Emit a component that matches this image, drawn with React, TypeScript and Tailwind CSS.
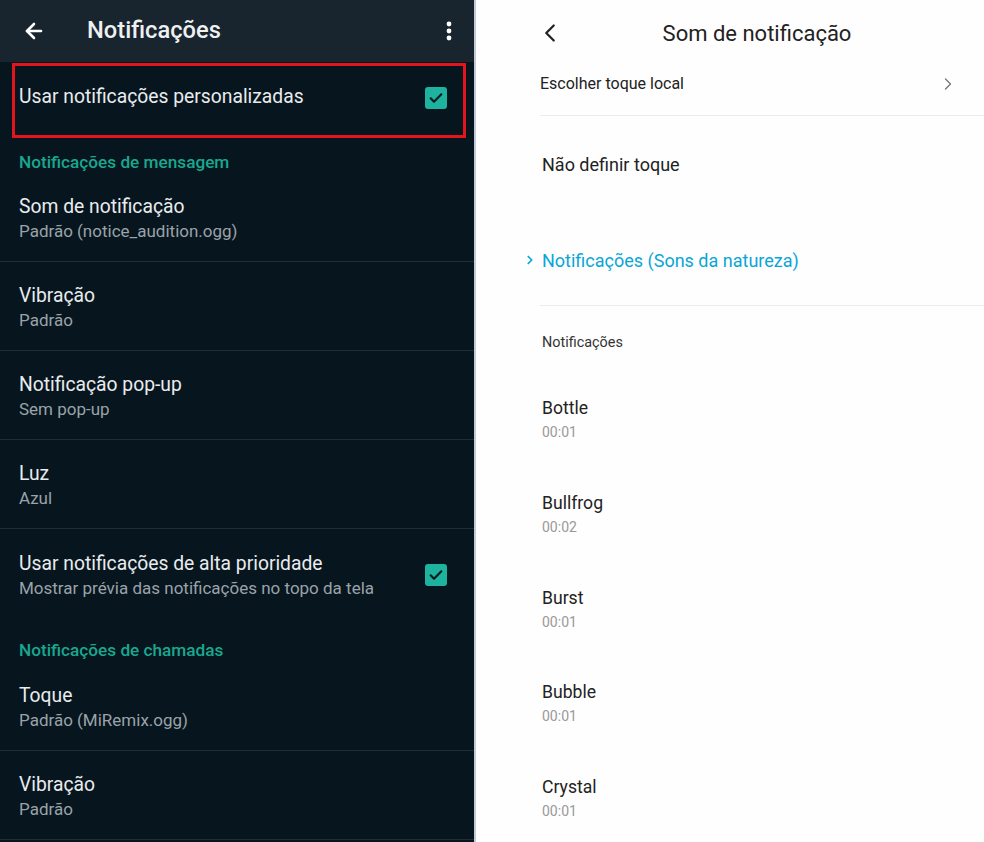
import React from 'react';
import { ArrowLeft, ChevronLeft, ChevronRight } from 'lucide-react';

interface Pref {
  title: string;
  sub: string;
}

const messagePrefs: Pref[] = [
  { title: 'Som de notificação', sub: 'Padrão (notice_audition.ogg)' },
  { title: 'Vibração', sub: 'Padrão' },
  { title: 'Notificação pop-up', sub: 'Sem pop-up' },
  { title: 'Luz', sub: 'Azul' },
];

const callPrefs: Pref[] = [
  { title: 'Toque', sub: 'Padrão (MiRemix.ogg)' },
  { title: 'Vibração', sub: 'Padrão' },
];

const sounds = [
  { name: 'Bottle', len: '00:01' },
  { name: 'Bullfrog', len: '00:02' },
  { name: 'Burst', len: '00:01' },
  { name: 'Bubble', len: '00:01' },
  { name: 'Crystal', len: '00:01' },
];

function Check() {
  return (
    <div className="w-[22px] h-[22px] rounded-[3px] bg-[#1db39e] flex items-center justify-center shrink-0">
      <svg width="16" height="16" viewBox="0 0 24 24" fill="none">
        <path d="M4 12.5l5 5L20 6.5" stroke="#0a1a20" strokeWidth="3.2" strokeLinecap="round" strokeLinejoin="round" />
      </svg>
    </div>
  );
}

function PrefRow({ pref }: { pref: Pref }) {
  return (
    <div className="h-[89px] shrink-0 border-b border-[#1f2d37] flex flex-col justify-center pl-[19px] pt-[2px]">
      <div className="text-[19.3px] leading-[24px] text-[#e9ecee]">{pref.title}</div>
      <div className="text-[17px] leading-[22px] text-[#9aa3a9] mt-[1px]">{pref.sub}</div>
    </div>
  );
}

function SectionTitle({ text, className }: { text: string; className: string }) {
  return (
    <div className={`shrink-0 pl-[19px] text-[17.2px] leading-[20px] font-medium text-[#19a88f] ${className}`}>{text}</div>
  );
}

function LeftPanel() {
  return (
    <div className="w-[474px] shrink-0 bg-[#07151e] h-full flex flex-col overflow-hidden" style={{ fontFamily: 'Roboto, "Noto Sans", sans-serif' }}>
      {/* toolbar */}
      <div className="h-[62px] bg-[#18242e] flex items-center shrink-0">
        <ArrowLeft className="ml-[22px] text-white" size={24} strokeWidth={2.6} />
        <div className="ml-[41px] text-[23.7px] font-medium text-[#eef0f1]">Notificações</div>
        <svg className="ml-auto mr-[22px]" width="6" height="20" viewBox="0 0 6 20">
          <circle cx="3" cy="3" r="2.4" fill="#fff" />
          <circle cx="3" cy="10" r="2.4" fill="#fff" />
          <circle cx="3" cy="17" r="2.4" fill="#fff" />
        </svg>
      </div>

      {/* highlighted row */}
      <div className="h-[75px] ml-[12px] mr-[8px] mt-[1px] border-[3px] border-[#e3151c] flex items-center pl-[4px] pr-[16px] shrink-0">
        <div className="flex-1 text-[19.3px] text-[#e9ecee] pb-[6px]">Usar notificações personalizadas</div>
        <div className="pb-[6px]"><Check /></div>
      </div>

      <SectionTitle text="Notificações de mensagem" className="pt-[14px] h-[35px]" />
      {messagePrefs.map((p, i) => (
        <PrefRow key={i} pref={p} />
      ))}

      <div className="h-[92px] shrink-0 flex items-center pl-[19px] pr-[27px]">
        <div className="flex-1">
          <div className="text-[19.3px] leading-[24px] text-[#e9ecee]">Usar notificações de alta prioridade</div>
          <div className="text-[17px] leading-[22px] text-[#9aa3a9] mt-[1px]">Mostrar prévia das notificações no topo da tela</div>
        </div>
        <Check />
      </div>

      <SectionTitle text="Notificações de chamadas" className="pt-[19px] h-[41px]" />
      {callPrefs.map((p, i) => (
        <PrefRow key={i} pref={p} />
      ))}
    </div>
  );
}

function RightPanel() {
  return (
    <div className="flex-1 h-full bg-[#fefefe] border-l-2 border-[#c3c9d6] flex flex-col overflow-hidden" style={{ fontFamily: 'Roboto, "Noto Sans", sans-serif' }}>
      {/* header */}
      <div className="h-[60px] pt-[6px] flex items-center relative shrink-0">
        <ChevronLeft className="ml-[59px] text-[#222]" size={30} strokeWidth={1.8} />
        <div className="absolute left-0 right-0 text-center text-[22px] text-[#222] pointer-events-none pl-[54px]">Som de notificação</div>
      </div>

      <div className="ml-[64px] h-[56px] shrink-0 flex items-center border-b border-[#ececec] pr-[26px] pb-[8px]">
        <div className="flex-1 text-[16px] text-[#222]">Escolher toque local</div>
        <ChevronRight className="text-[#777]" size={20} strokeWidth={1.6} />
      </div>

      <div className="ml-[66px] h-[96px] shrink-0 flex items-center text-[18px] text-[#222]">Não definir toque</div>

      <div className="h-[94px] shrink-0 border-b border-[#ececec] ml-[64px] flex items-center pt-[3px]">
        <div className="flex items-center -ml-[17px]">
          <ChevronRight className="text-[#0aa6d6] mr-[5px]" size={14} strokeWidth={3} />
          <span className="text-[18px] text-[#0aa6d6]">Notificações (Sons da natureza)</span>
        </div>
      </div>

      <div className="ml-[66px] shrink-0 pt-[28px] text-[14.4px] text-[#333] leading-[18px]">Notificações</div>

      <div className="ml-[66px] mt-[45px] shrink-0 flex flex-col">
        {sounds.map((s, i) => (
          <div key={i} className="h-[94.75px] shrink-0">
            <div className="text-[17.6px] leading-[22px] text-[#222]">{s.name}</div>
            <div className="text-[14px] leading-[18px] text-[#999] mt-[4px]">{s.len}</div>
          </div>
        ))}
      </div>
    </div>
  );
}

export default function App() {
  return (
    <div className="w-[984px] h-[842px] flex overflow-hidden">
      <LeftPanel />
      <RightPanel />
    </div>
  );
}
